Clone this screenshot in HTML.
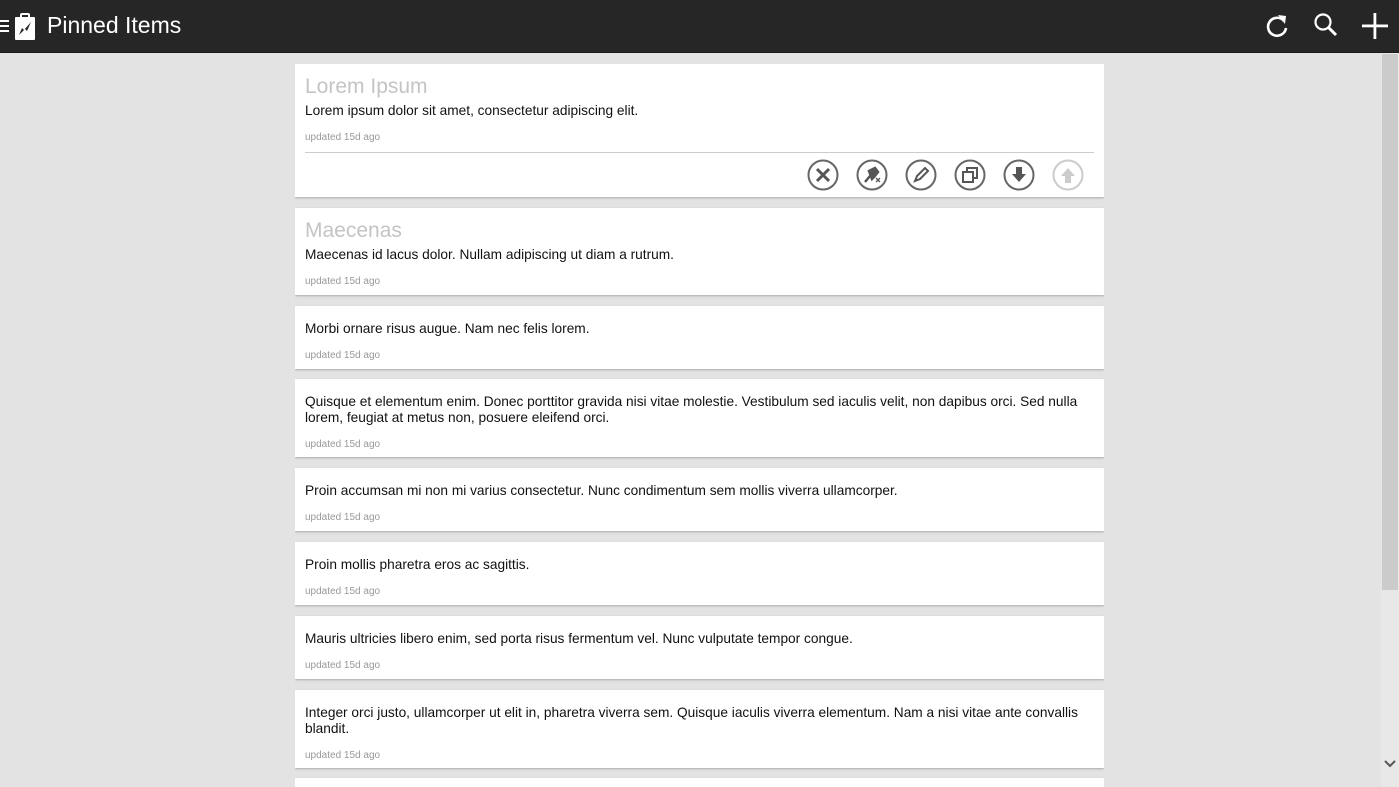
<!DOCTYPE html>
<html><head><meta charset="utf-8"><style>
*{box-sizing:border-box;margin:0;padding:0}
html,body{width:1399px;height:787px;overflow:hidden}
body{background:#e3e3e3;font-family:"Liberation Sans",Arial,sans-serif;position:relative}
.hdr{position:absolute;left:0;top:0;width:1399px;height:53px;background:#262626;border-bottom:1px solid #1a1a1a}
.hdr .t{position:absolute;left:47px;top:12px;color:#fff;font-size:23px}
.list{position:absolute;left:295px;top:64px;width:809px;height:723px;overflow:hidden}
.card{background:#fff;margin-bottom:10.8px;padding:15px 10px 7px;box-shadow:0 1px 2px rgba(0,0,0,.25)}
.title{font-size:21px;color:#c4c4c4;line-height:24px;margin-top:-4px;margin-bottom:4px}
.b{font-size:13.7px;line-height:16px;color:#111}
.u{font-size:10px;color:#999;line-height:12px;margin-top:13px}
.div{border-top:1px solid #ccc;margin:8px 0 0 0}
.icons{position:relative;height:38px}
.ic{position:absolute;top:6px;width:32px;height:32px}
.sb{position:absolute;left:1381px;top:53px;width:18px;height:734px;background:#e8e8e8}
.th{position:absolute;left:1382px;top:54px;width:16px;height:536px;background:#cbcbcb}
</style></head><body>
<div class="hdr">
<svg style="position:absolute;left:0;top:18px" width="10" height="16"><rect x="0" y="2" width="9" height="2" fill="#fff"/><rect x="0" y="7" width="9" height="2" fill="#fff"/><rect x="0" y="12" width="9" height="2" fill="#fff"/></svg>
<svg style="position:absolute;left:15px;top:13px" width="21" height="28" viewBox="0 0 21 28"><rect x="0" y="4" width="20" height="23" rx="1" fill="#fff"/><rect x="6" y="1" width="8" height="5" rx="1" fill="none" stroke="#fff" stroke-width="2"/><path d="M4 22 L7 15 L9 17 L16 9 L12 18 L10 16 Z" fill="#262626"/></svg>
<div class="t">Pinned Items</div>
<svg style="position:absolute;left:1264px;top:13px" width="26" height="26" viewBox="0 0 26 26"><path d="M20 8 A9 9 0 1 0 22 15" fill="none" stroke="#fff" stroke-width="2.6"/><path d="M14 2 L22 3 L21 11 Z" fill="#fff"/></svg>
<svg style="position:absolute;left:1313px;top:12px" width="26" height="26" viewBox="0 0 26 26"><circle cx="10" cy="10" r="7.5" fill="none" stroke="#fff" stroke-width="2.2"/><path d="M15.5 15.5 L23 23" stroke="#fff" stroke-width="3"/></svg>
<svg style="position:absolute;left:1361px;top:12px" width="28" height="28"><rect x="12.5" y="1" width="2.8" height="26" fill="#fff"/><rect x="1" y="12.5" width="26" height="2.8" fill="#fff"/></svg>
</div>
<div class="sb"></div><div class="th"></div>
<svg style="position:absolute;left:1384px;top:759px" width="12" height="10"><path d="M1 2 L6 7 L11 2" fill="none" stroke="#555" stroke-width="2"/></svg>
<div class="list">
<div class="card" style="padding-bottom:6px"><div class="title">Lorem Ipsum</div><div class="b">Lorem ipsum dolor sit amet, consectetur adipiscing elit.</div><div class="u">updated 15d ago</div><div class="div"></div>
<div class="icons">
<svg class="ic" style="left:502px" viewBox="0 0 32 32"><circle cx="16" cy="16" r="14.5" fill="none" stroke="#666" stroke-width="2"/><path d="M10 10 L22 22 M22 10 L10 22" stroke="#555" stroke-width="3"/></svg>
<svg class="ic" style="left:551px" viewBox="0 0 32 32"><circle cx="16" cy="16" r="14.5" fill="none" stroke="#666" stroke-width="2"/><path d="M9 23 L14 17 M13 12 L19 9 L22 13 L18 18 L16 20 Z" stroke="#555" stroke-width="2.5" fill="#555"/><path d="M20 19 L24 23 M24 19 L20 23" stroke="#555" stroke-width="1.3"/></svg>
<svg class="ic" style="left:600px" viewBox="0 0 32 32"><circle cx="16" cy="16" r="14.5" fill="none" stroke="#666" stroke-width="2"/><path d="M10 22 L12 17 L20 9 L23 12 L15 20 Z" fill="none" stroke="#555" stroke-width="2"/></svg>
<svg class="ic" style="left:649px" viewBox="0 0 32 32"><circle cx="16" cy="16" r="14.5" fill="none" stroke="#666" stroke-width="2"/><rect x="9" y="13" width="10" height="10" fill="none" stroke="#555" stroke-width="2"/><path d="M13 13 V9 H23 V19 H19" fill="none" stroke="#555" stroke-width="2"/></svg>
<svg class="ic" style="left:698px" viewBox="0 0 32 32"><circle cx="16" cy="16" r="14.5" fill="none" stroke="#666" stroke-width="2"/><path d="M13 8 H19 V15 H23 L16 23 L9 15 H13 Z" fill="#555"/></svg>
<svg class="ic" style="left:747px" viewBox="0 0 32 32"><circle cx="16" cy="16" r="14.5" fill="none" stroke="#ccc" stroke-width="2"/><path d="M13 24 H19 V17 H23 L16 9 L9 17 H13 Z" fill="#ccc"/></svg>
</div></div>
<div class="card" style="padding-bottom:7px"><div class="title">Maecenas</div><div class="b">Maecenas id lacus dolor. Nullam adipiscing ut diam a rutrum.</div><div class="u">updated 15d ago</div></div>
<div class="card"><div class="b">Morbi ornare risus augue. Nam nec felis lorem.</div><div class="u">updated 15d ago</div></div>
<div class="card" style="padding-bottom:6px"><div class="b">Quisque et elementum enim. Donec porttitor gravida nisi vitae molestie. Vestibulum sed iaculis velit, non dapibus orci. Sed nulla lorem, feugiat at metus non, posuere eleifend orci.</div><div class="u">updated 15d ago</div></div>
<div class="card"><div class="b">Proin accumsan mi non mi varius consectetur. Nunc condimentum sem mollis viverra ullamcorper.</div><div class="u">updated 15d ago</div></div>
<div class="card"><div class="b">Proin mollis pharetra eros ac sagittis.</div><div class="u">updated 15d ago</div></div>
<div class="card"><div class="b">Mauris ultricies libero enim, sed porta risus fermentum vel. Nunc vulputate tempor congue.</div><div class="u">updated 15d ago</div></div>
<div class="card" style="padding-bottom:6px"><div class="b">Integer orci justo, ullamcorper ut elit in, pharetra viverra sem. Quisque iaculis viverra elementum. Nam a nisi vitae ante convallis blandit.</div><div class="u">updated 15d ago</div></div>
<div class="card" style="height:40px"></div>
</div>
</body></html>
